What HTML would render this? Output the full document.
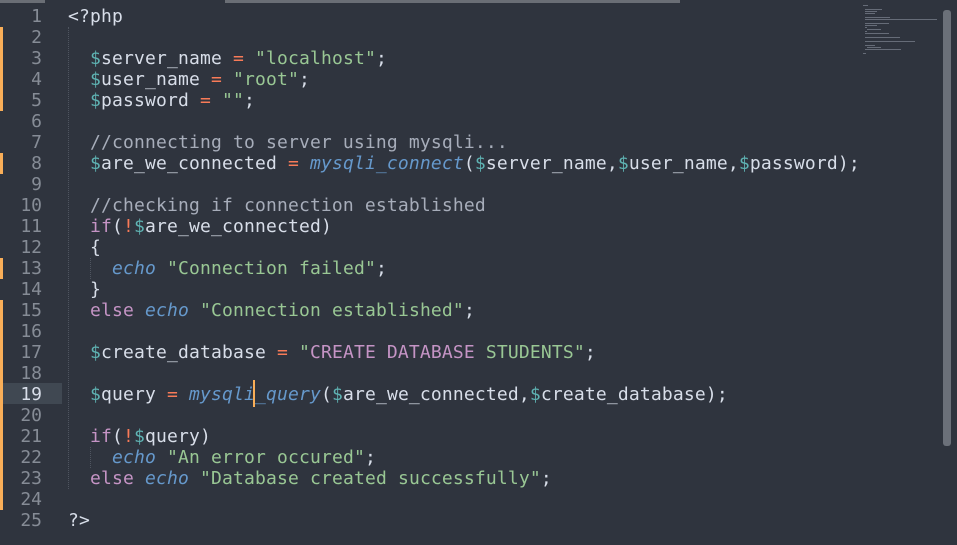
<!DOCTYPE html>
<html><head><style>
body{margin:0;width:957px;height:545px;background:#2f343e;overflow:hidden;position:relative;font-family:"DejaVu Sans Mono","Liberation Mono",monospace;font-size:18px;}
.top{position:absolute;left:0;top:0;width:957px;height:3px;background:#6a6e75;}
.top2{position:absolute;left:45px;top:0;width:180px;height:3px;background:#2f343e;}
.top3{position:absolute;left:680px;top:0;width:277px;height:3px;background:#2f343e;}
.gut{position:absolute;left:0;top:6px;width:42px;text-align:right;color:#868c96;line-height:21px;white-space:pre;}
.code{position:absolute;left:68px;top:6px;line-height:21px;white-space:pre;color:#d8dee9;letter-spacing:0.16px;}
.m{position:absolute;left:0;width:3px;background:#f9ae58;}
.hl{position:absolute;left:3px;top:383px;width:59px;height:21px;background:#404852;}
.v{color:#5fb3b3}.o{color:#f97b58}.s{color:#99c794}.c{color:#a7adba}.k{color:#c594c5}.f{color:#6699cc;font-style:italic}
.guide{position:absolute;left:68px;border-left:1px dotted #4f5560;}
.sb{position:absolute;left:943px;top:10px;width:8px;height:436px;background:#6b7079;border-radius:3px;}
.cur{position:absolute;left:253px;top:380px;width:2px;height:27px;background:#f9ae58;}
.mm{position:absolute;height:1px;background:#7d8591;opacity:.7}
</style></head><body>
<div class="top"></div><div class="top2"></div><div class="top3"></div>
<div class="hl"></div>
<div class="m" style="top:27px;height:84px"></div>
<div class="m" style="top:153px;height:21px"></div>
<div class="m" style="top:258px;height:21px"></div>
<div class="m" style="top:300px;height:210px"></div>
<div class="guide" style="top:27px;height:462px"></div>
<div class="guide" style="left:90px;top:258px;height:21px"></div>
<div class="guide" style="left:90px;top:447px;height:21px"></div>
<div class="mm" style="left:863px;top:5px;width:5px"></div>
<div class="mm" style="left:865px;top:9px;width:17px"></div>
<div class="mm" style="left:865px;top:11px;width:12px"></div>
<div class="mm" style="left:865px;top:13px;width:10px"></div>
<div class="mm" style="left:865px;top:17px;width:25px"></div>
<div class="mm" style="left:865px;top:19px;width:72px"></div>
<div class="mm" style="left:865px;top:23px;width:24px"></div>
<div class="mm" style="left:865px;top:25px;width:12px"></div>
<div class="mm" style="left:865px;top:27px;width:2px"></div>
<div class="mm" style="left:867px;top:29px;width:14px"></div>
<div class="mm" style="left:865px;top:31px;width:2px"></div>
<div class="mm" style="left:865px;top:33px;width:24px"></div>
<div class="mm" style="left:865px;top:37px;width:35px"></div>
<div class="mm" style="left:865px;top:41px;width:50px"></div>
<div class="mm" style="left:865px;top:45px;width:10px"></div>
<div class="mm" style="left:867px;top:47px;width:14px"></div>
<div class="mm" style="left:865px;top:49px;width:36px"></div>
<div class="mm" style="left:863px;top:53px;width:3px"></div>
<div class="gut">1
2
3
4
5
6
7
8
9
10
11
12
13
14
15
16
17
18
<span style="color:#d8dee9">19</span>
20
21
22
23
24
25</div>
<div class="code">&lt;?php

  <span class="v">$</span>server_name <span class="o">=</span> <span class="s">"localhost"</span>;
  <span class="v">$</span>user_name <span class="o">=</span> <span class="s">"root"</span>;
  <span class="v">$</span>password <span class="o">=</span> <span class="s">""</span>;

  <span class="c">//connecting to server using mysqli...</span>
  <span class="v">$</span>are_we_connected <span class="o">=</span> <span class="f">mysqli_connect</span>(<span class="v">$</span>server_name,<span class="v">$</span>user_name,<span class="v">$</span>password);

  <span class="c">//checking if connection established</span>
  <span class="k">if</span>(<span class="o">!</span><span class="v">$</span>are_we_connected)
  {
    <span class="f">echo</span> <span class="s">"Connection failed"</span>;
  }
  <span class="k">else</span> <span class="f">echo</span> <span class="s">"Connection established"</span>;

  <span class="v">$</span>create_database <span class="o">=</span> <span class="s">"</span><span class="k">CREATE DATABASE</span><span class="s"> STUDENTS"</span>;

  <span class="v">$</span>query <span class="o">=</span> <span class="f">mysqli_query</span>(<span class="v">$</span>are_we_connected,<span class="v">$</span>create_database);

  <span class="k">if</span>(<span class="o">!</span><span class="v">$</span>query)
    <span class="f">echo</span> <span class="s">"An error occured"</span>;
  <span class="k">else</span> <span class="f">echo</span> <span class="s">"Database created successfully"</span>;

?&gt;</div>
<div class="cur"></div>
<div class="sb"></div>
</body></html>
